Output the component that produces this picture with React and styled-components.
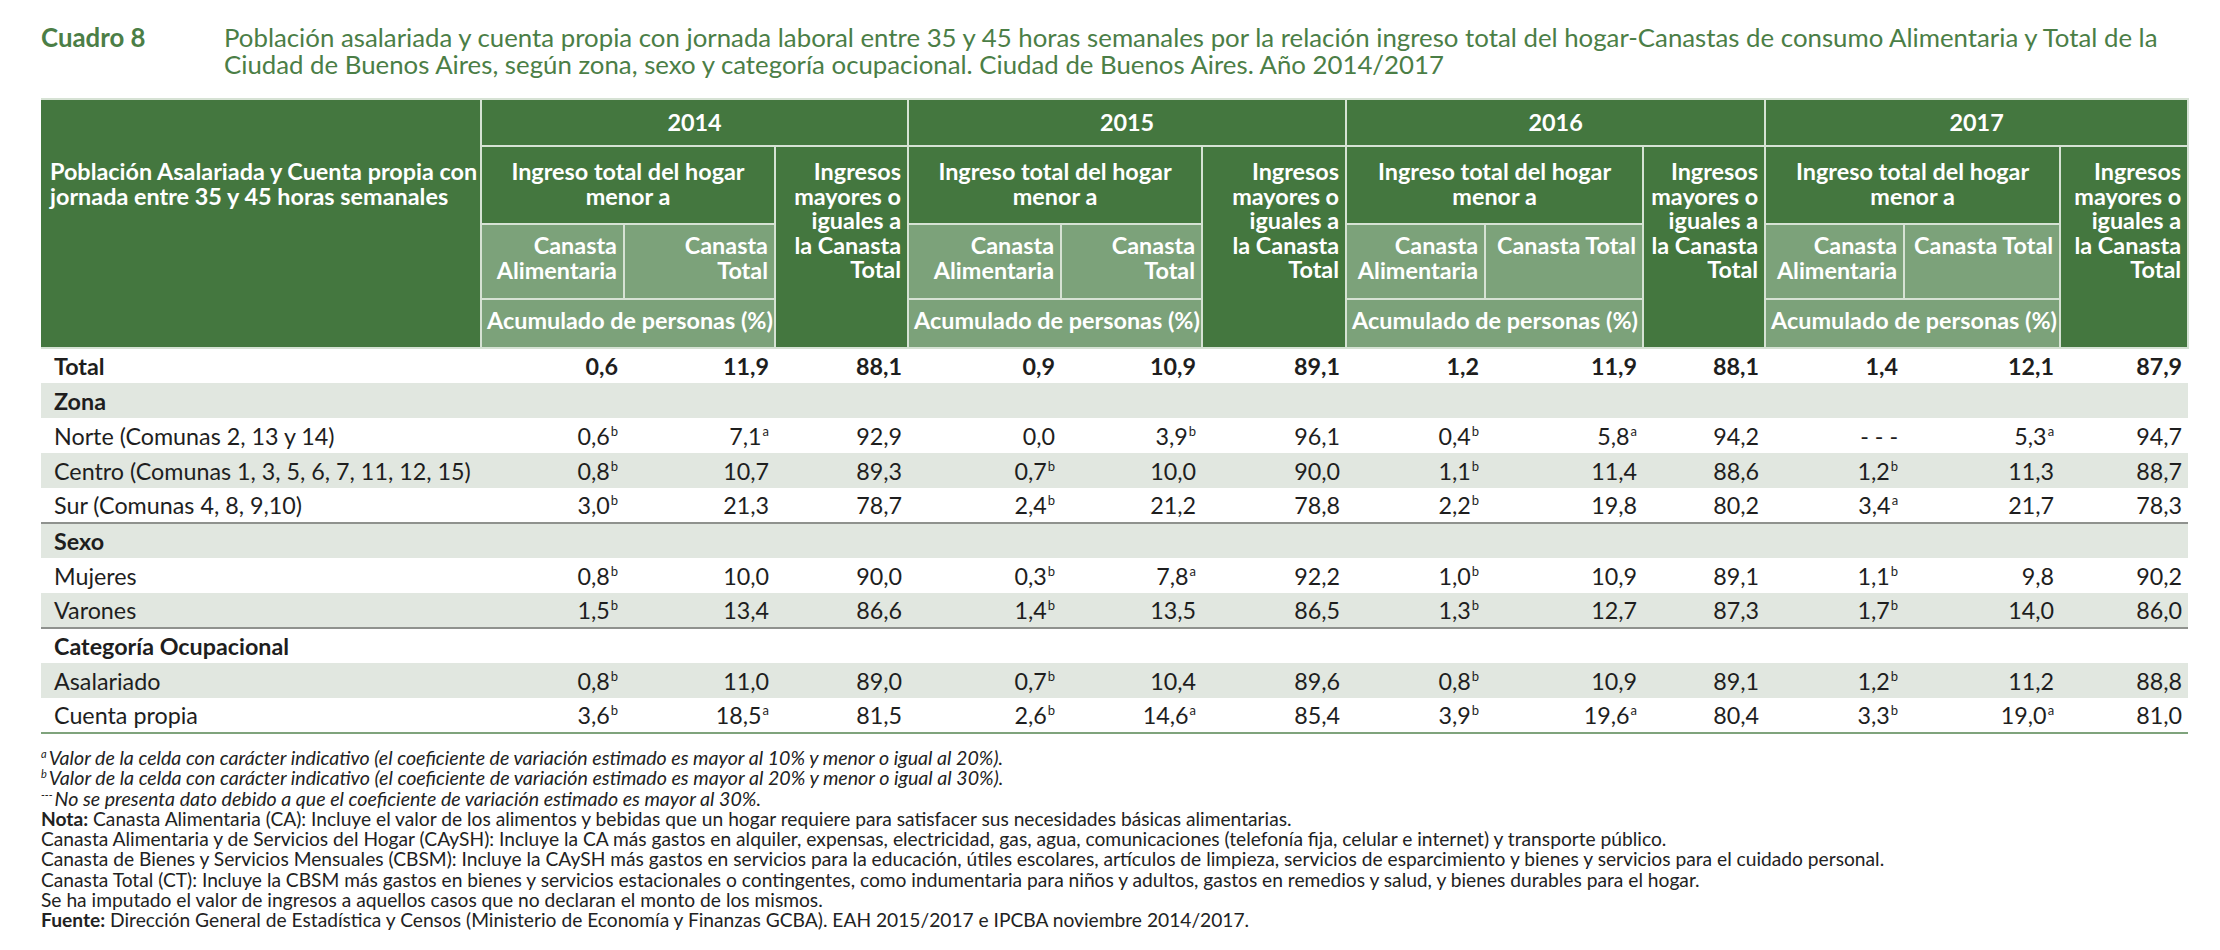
import React from "react";
import styled, { createGlobalStyle } from "styled-components";

const GlobalStyle = createGlobalStyle`
  body {
    margin: 0;
    background: #ffffff;
    font-family: Lato, "Open Sans", "Liberation Sans", sans-serif;
    color: #1e1e1e;
  }
`;

const Page = styled.main`
  padding: 24px 0 0 41px;
`;

const TitleBar = styled.header`
  display: flex;
  align-items: flex-start;
  color: #4b7e46;
  font-size: 25.8px;
  line-height: 27px;
`;

const TableNumber = styled.div`
  flex: none;
  width: 183px;
  font-weight: 700;
`;

const Caption = styled.div`
  white-space: nowrap;
`;

const Table = styled.table`
  margin-top: 20px;
  width: 2147px;
  table-layout: fixed;
  border-collapse: collapse;
  border-top: 2px solid #cfd9cd;
`;

const HeadRow = styled.tr`
  height: ${(p) => p.$h}px;
`;

const HeadCell = styled.th`
  background: #44773f;
  color: #ffffff;
  font-weight: 700;
  font-size: 23.4px;
  line-height: 24.5px;
  border: 2px solid #d6e2d4;
  padding: 0 6px;
  vertical-align: top;
`;

const CornerCell = styled(HeadCell)`
  text-align: left;
  padding: 59px 0 0 9px;
  border-left: none;
`;

const YearCell = styled(HeadCell)`
  text-align: center;
  vertical-align: middle;
`;

const IncomeCell = styled(HeadCell)`
  text-align: center;
  padding-top: 12px;
`;

const AboveCell = styled(HeadCell)`
  text-align: right;
  padding-top: 12px;
`;

const BasketCell = styled(HeadCell)`
  background: #7ca27a;
  text-align: right;
  padding-top: 8px;
  white-space: ${(p) => (p.$oneLine ? "nowrap" : "normal")};
`;

const UnitCell = styled(HeadCell)`
  background: #7ca27a;
  text-align: left;
  padding: 8px 0 0 5px;
  white-space: nowrap;
`;

const Row = styled.tr`
  height: 35px;
  background: ${(p) => (p.$shade ? "#e1e7e0" : "#ffffff")};
  border-bottom: ${(p) => (p.$rule ? `2px solid ${p.$rule}` : "none")};
`;

const LabelCell = styled.td`
  padding: 0 0 0 13px;
  font-size: 23.3px;
  font-weight: ${(p) => (p.$bold ? 700 : 400)};
  white-space: nowrap;
`;

const ValueCell = styled.td`
  padding: 0 6px 0 0;
  text-align: right;
  font-size: 23.3px;
  font-weight: ${(p) => (p.$bold ? 700 : 400)};
  white-space: nowrap;
`;

const Mark = styled.sup`
  font-size: 13px;
  line-height: 0;
  vertical-align: 9px;
  margin-left: 1px;
`;

const Notes = styled.section`
  margin-top: 14px;
  font-size: 19.2px;
  line-height: 20.3px;
  color: #222222;
`;

const Note = styled.p`
  margin: 0;
  white-space: nowrap;
  font-style: ${(p) => (p.$italic ? "italic" : "normal")};
  font-size: ${(p) => (p.$italic ? "19.6px" : "inherit")};
`;

const NoteMark = styled.sup`
  font-size: 11px;
  line-height: 0;
  vertical-align: 7px;
  margin-right: 2px;
`;

const years = [
  { year: "2014", breakTotal: true },
  { year: "2015", breakTotal: true },
  { year: "2016", breakTotal: false },
  { year: "2017", breakTotal: false },
];

const widths = [440, 143, 151, 133, 153, 141, 144, 139, 158, 122, 139, 156, 128];

const rows = [
  { label: "Total", bold: true, values: ["0,6", "11,9", "88,1", "0,9", "10,9", "89,1", "1,2", "11,9", "88,1", "1,4", "12,1", "87,9"] },
  { label: "Zona", bold: true, shade: true },
  { label: "Norte (Comunas 2, 13 y 14)", values: ["0,6^b", "7,1^a", "92,9", "0,0", "3,9^b", "96,1", "0,4^b", "5,8^a", "94,2", "- - -", "5,3^a", "94,7"] },
  { label: "Centro (Comunas 1, 3, 5, 6, 7, 11, 12, 15)", shade: true, values: ["0,8^b", "10,7", "89,3", "0,7^b", "10,0", "90,0", "1,1^b", "11,4", "88,6", "1,2^b", "11,3", "88,7"] },
  { label: "Sur (Comunas 4, 8, 9,10)", rule: "#8f928e", values: ["3,0^b", "21,3", "78,7", "2,4^b", "21,2", "78,8", "2,2^b", "19,8", "80,2", "3,4^a", "21,7", "78,3"] },
  { label: "Sexo", bold: true, shade: true },
  { label: "Mujeres", values: ["0,8^b", "10,0", "90,0", "0,3^b", "7,8^a", "92,2", "1,0^b", "10,9", "89,1", "1,1^b", "9,8", "90,2"] },
  { label: "Varones", shade: true, rule: "#8f928e", values: ["1,5^b", "13,4", "86,6", "1,4^b", "13,5", "86,5", "1,3^b", "12,7", "87,3", "1,7^b", "14,0", "86,0"] },
  { label: "Categoría Ocupacional", bold: true },
  { label: "Asalariado", shade: true, values: ["0,8^b", "11,0", "89,0", "0,7^b", "10,4", "89,6", "0,8^b", "10,9", "89,1", "1,2^b", "11,2", "88,8"] },
  { label: "Cuenta propia", rule: "#7fa37c", values: ["3,6^b", "18,5^a", "81,5", "2,6^b", "14,6^a", "85,4", "3,9^b", "19,6^a", "80,4", "3,3^b", "19,0^a", "81,0"] },
];

const Value = ({ text }) => {
  const [num, mark] = text.split("^");
  return (
    <>
      {num}
      {mark && <Mark>{mark}</Mark>}
    </>
  );
};

// header rows: years / income / baskets / unit
const TableHead = () => (
  <thead>
    <HeadRow $h={47}>
      <CornerCell rowSpan={4}>
        Población Asalariada y Cuenta propia con
        <br />
        jornada entre 35 y 45 horas semanales
      </CornerCell>
      {years.map((y) => (
        <YearCell key={y.year} colSpan={3}>
          {y.year}
        </YearCell>
      ))}
    </HeadRow>
    <HeadRow $h={78}>
      {years.map((y) => (
        <React.Fragment key={y.year}>
          <IncomeCell colSpan={2}>
            Ingreso total del hogar
            <br />
            menor a
          </IncomeCell>
          <AboveCell rowSpan={3}>
            Ingresos
            <br />
            mayores o
            <br />
            iguales a
            <br />
            la Canasta
            <br />
            Total
          </AboveCell>
        </React.Fragment>
      ))}
    </HeadRow>
    <HeadRow $h={75}>
      {years.map((y) => (
        <React.Fragment key={y.year}>
          <BasketCell>
            Canasta
            <br />
            Alimentaria
          </BasketCell>
          <BasketCell $oneLine={!y.breakTotal}>
            Canasta
            {y.breakTotal ? <br /> : " "}
            Total
          </BasketCell>
        </React.Fragment>
      ))}
    </HeadRow>
    <HeadRow $h={49}>
      {years.map((y) => (
        <UnitCell key={y.year} colSpan={2}>
          Acumulado de personas (%)
        </UnitCell>
      ))}
    </HeadRow>
  </thead>
);

const App = () => {
  return (
    <Page>
      <GlobalStyle />
      <TitleBar>
        <TableNumber>Cuadro 8</TableNumber>
        <Caption>
          Población asalariada y cuenta propia con jornada laboral entre 35 y 45 horas semanales por la relación ingreso total del hogar-Canastas de consumo Alimentaria y Total de la
          <br />
          Ciudad de Buenos Aires, según zona, sexo y categoría ocupacional. Ciudad de Buenos Aires. Año 2014/2017
        </Caption>
      </TitleBar>

      <Table>
        <colgroup>
          {widths.map((w, i) => (
            <col key={i} style={{ width: w }} />
          ))}
        </colgroup>
        <TableHead />
        <tbody>
          {rows.map((r) => (
            <Row key={r.label} $shade={r.shade} $rule={r.rule}>
              <LabelCell $bold={r.bold}>{r.label}</LabelCell>
              {widths.slice(1).map((_, i) => (
                <ValueCell key={i} $bold={r.bold}>
                  {r.values && <Value text={r.values[i]} />}
                </ValueCell>
              ))}
            </Row>
          ))}
        </tbody>
      </Table>

      <Notes>
        <Note $italic>
          <NoteMark>a</NoteMark>Valor de la celda con carácter indicativo (el coeficiente de variación estimado es mayor al 10% y menor o igual al 20%).
        </Note>
        <Note $italic>
          <NoteMark>b</NoteMark>Valor de la celda con carácter indicativo (el coeficiente de variación estimado es mayor al 20% y menor o igual al 30%).
        </Note>
        <Note $italic>
          <NoteMark>---</NoteMark>No se presenta dato debido a que el coeficiente de variación estimado es mayor al 30%.
        </Note>
        <Note>
          <b>Nota:</b> Canasta Alimentaria (CA): Incluye el valor de los alimentos y bebidas que un hogar requiere para satisfacer sus necesidades básicas alimentarias.
        </Note>
        <Note>
          Canasta Alimentaria y de Servicios del Hogar (CAySH): Incluye la CA más gastos en alquiler, expensas, electricidad, gas, agua, comunicaciones (telefonía fija, celular e internet) y transporte público.
        </Note>
        <Note>
          Canasta de Bienes y Servicios Mensuales (CBSM): Incluye la CAySH más gastos en servicios para la educación, útiles escolares, artículos de limpieza, servicios de esparcimiento y bienes y servicios para el cuidado personal.
        </Note>
        <Note>
          Canasta Total (CT): Incluye la CBSM más gastos en bienes y servicios estacionales o contingentes, como indumentaria para niños y adultos, gastos en remedios y salud, y bienes durables para el hogar.
        </Note>
        <Note>Se ha imputado el valor de ingresos a aquellos casos que no declaran el monto de los mismos.</Note>
        <Note>
          <b>Fuente:</b> Dirección General de Estadística y Censos (Ministerio de Economía y Finanzas GCBA). EAH 2015/2017 e IPCBA noviembre 2014/2017.
        </Note>
      </Notes>
    </Page>
  );
};

export default App;
